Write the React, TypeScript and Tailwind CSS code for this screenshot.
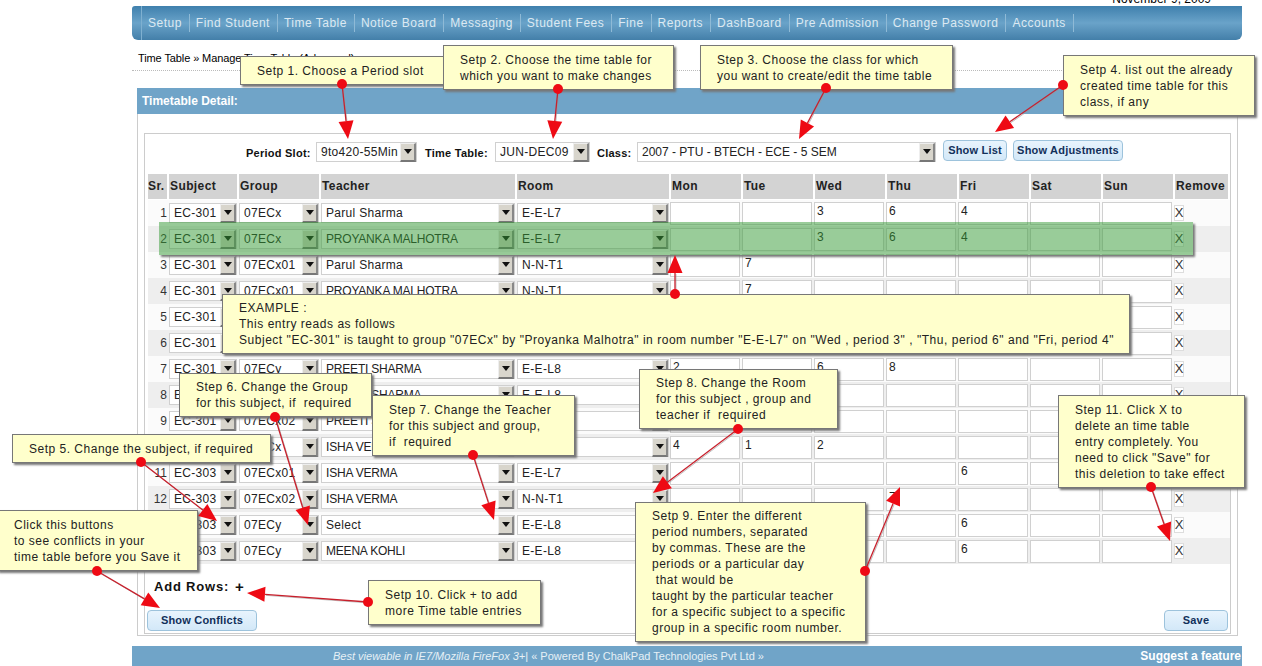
const font = { fontFamily: '"Liberation Sans", Arial, sans-serif' };

const navItems = [
  "Setup",
  "Find Student",
  "Time Table",
  "Notice Board",
  "Messaging",
  "Student Fees",
  "Fine",
  "Reports",
  "DashBoard",
  "Pre Admission",
  "Change Password",
  "Accounts",
];

const days = ["Mon", "Tue", "Wed", "Thu", "Fri", "Sat", "Sun"];

type Row = [string, string, string, string, string[]];

const rows: Row[] = [
  ["EC-301", "07ECx", "Parul Sharma", "E-E-L7", ["", "", "3", "6", "4", "", ""]],
  ["EC-301", "07ECx", "PROYANKA MALHOTRA", "E-E-L7", ["", "", "3", "6", "4", "", ""]],
  ["EC-301", "07ECx01", "Parul Sharma", "N-N-T1", ["", "7", "", "", "", "", ""]],
  ["EC-301", "07ECx01", "PROYANKA MALHOTRA", "N-N-T1", ["", "7", "", "", "", "", ""]],
  ["EC-301", "07ECx02", "Parul Sharma", "E-E-L8", ["", "", "", "", "", "", ""]],
  ["EC-301", "07ECx02", "PROYANKA MALHOTRA", "E-E-L8", ["", "", "", "", "", "", ""]],
  ["EC-301", "07ECy", "PREETI SHARMA", "E-E-L8", ["2", "", "6", "8", "", "", ""]],
  ["EC-301", "07ECy", "PREETI SHARMA", "E-E-L8", ["", "", "", "", "", "", ""]],
  ["EC-301", "07ECx02", "PREETI SHARMA", "E-E-L8", ["", "", "", "", "", "", ""]],
  ["EC-303", "07ECx", "ISHA VERMA", "E-E-L7", ["4", "1", "2", "", "", "", ""]],
  ["EC-303", "07ECx01", "ISHA VERMA", "E-E-L7", ["", "", "", "", "6", "", ""]],
  ["EC-303", "07ECx02", "ISHA VERMA", "N-N-T1", ["", "", "", "7", "", "", ""]],
  ["EC-303", "07ECy", "Select", "E-E-L8", ["", "", "", "", "6", "", ""]],
  ["EC-303", "07ECy", "MEENA KOHLI", "E-E-L8", ["", "", "", "", "6", "", ""]],
];

const callouts = [
  { text: "Setp 1. Choose a Period slot", cls: "left-[240px] top-[56px] w-[204px] h-[29px]" },
  { text: "Setp 2. Choose the time table for\nwhich you want to make changes", cls: "left-[443px] top-[45px] w-[231px] h-[45px]" },
  { text: "Step 3. Choose the class for which\nyou want to create/edit the time table", cls: "left-[700px] top-[45px] w-[253px] h-[45px]" },
  { text: "Setp 4. list out the already\ncreated time table for this\nclass, if any", cls: "left-[1063px] top-[55px] w-[192px] h-[61px]" },
  {
    text: 'EXAMPLE :\nThis entry reads as follows\nSubject "EC-301" is taught to group "07ECx" by "Proyanka Malhotra" in room number "E-E-L7" on "Wed , period 3" , "Thu, period 6" and "Fri, period 4"',
    cls: "left-[222px] top-[294px] w-[908px] h-[60px]",
    track: "tracking-[0.53px]",
  },
  { text: "Step 6. Change the Group\nfor this subject, if  required", cls: "left-[179px] top-[373px] w-[193px] h-[44px]" },
  { text: "Step 7. Change the Teacher\nfor this subject and group,\nif  required", cls: "left-[372px] top-[395px] w-[203px] h-[61px]" },
  { text: "Setp 5. Change the subject, if required", cls: "left-[12px] top-[434px] w-[259px] h-[29px]" },
  { text: "Click this buttons\nto see conflicts in your\ntime table before you Save it", cls: "left-[-3px] top-[510px] w-[201px] h-[61px]" },
  { text: "Setp 10. Click + to add\nmore Time table entries", cls: "left-[368px] top-[580px] w-[173px] h-[45px]" },
  { text: "Step 8. Change the Room\nfor this subject , group and\nteacher if  required", cls: "left-[639px] top-[369px] w-[199px] h-[60px]" },
  {
    text: "Setp 9. Enter the different\nperiod numbers, separated\nby commas. These are the\nperiods or a particular day\n that would be\ntaught by the particular teacher\nfor a specific subject to a specific\ngroup in a specific room number.",
    cls: "left-[635px] top-[502px] w-[231px] h-[140px]",
  },
  { text: 'Step 11. Click X to\ndelete an time table\nentry completely. You\nneed to click "Save" for\nthis deletion to take effect', cls: "left-[1058px] top-[395px] w-[187px] h-[93px]" },
];

// dot position, then arrow tip
const arrows = [
  [342, 84, 348, 139],
  [558, 89, 553, 139],
  [826, 88, 799, 139],
  [1063, 85, 995, 132],
  [675, 294, 675, 255],
  [275, 417, 308, 525],
  [141, 462, 217, 521],
  [473, 455, 494, 520],
  [738, 429, 653, 493],
  [865, 571, 900, 487],
  [1151, 487, 1170, 541],
  [368, 602, 247, 593],
  [97, 571, 160, 608],
];

function Arrows() {
  return (
    <svg className="pointer-events-none absolute left-0 top-0" width={1262} height={666}>
      {arrows.map(([x1, y1, x2, y2], i) => {
        const len = Math.hypot(x2 - x1, y2 - y1);
        const ux = (x2 - x1) / len;
        const uy = (y2 - y1) / len;
        const bx = x2 - ux * 18;
        const by = y2 - uy * 18;
        const head = `${x2},${y2} ${bx - uy * 7.5},${by + ux * 7.5} ${bx + uy * 7.5},${by - ux * 7.5}`;
        return (
          <g key={i}>
            <line x1={x1 + 1} y1={y1 + 1} x2={bx + 1} y2={by + 1} stroke="#999" strokeWidth={1} opacity={0.6} />
            <line x1={x1} y1={y1} x2={bx} y2={by} stroke="#c8202c" strokeWidth={1.3} />
            <polygon points={head} fill="#ee0a14" />
            <circle cx={x1} cy={y1} r={5} fill="#ee0a14" />
          </g>
        );
      })}
    </svg>
  );
}

function Select({ value, className }: { value: string; className: string }) {
  // capitals run narrower than the mixed case names in the picture
  const tracking = value.startsWith("2007") ? "tracking-[0px]" : /[A-Z]{4}/.test(value) ? "tracking-[-0.2px]" : "tracking-[0.3px]";
  return (
    <div className={`flex h-[20px] items-center justify-between border border-[#d0d0d0] bg-white pl-[4px] text-[12px] font-normal text-[#222] ${tracking} ${className}`}>
      <span className="whitespace-nowrap">{value}</span>
      <span className="flex h-[19px] w-[16px] shrink-0 items-center justify-center border-b-2 border-r-2 border-t border-l border-b-[#777] border-r-[#888] border-t-[#eee] border-l-[#eee] bg-[#d8d5cc]">
        <svg width="8" height="5" viewBox="0 0 8 5">
          <path d="M0 0h8L4 5z" fill="#111" />
        </svg>
      </span>
    </div>
  );
}

function Btn({ label, className }: { label: string; className: string }) {
  return (
    <button className={`h-[21px] rounded-[4px] border border-[#9dc3dc] bg-linear-to-b from-[#e8f4fd] to-[#d3e8f8] text-[11px] font-bold tracking-[0.2px] text-[#12305a] ${className}`}>
      {label}
    </button>
  );
}

export default function App() {
  return (
    <div className="relative h-[666px] w-[1262px] overflow-hidden bg-white text-black" style={font}>
      <div className="flex h-[6px] items-end justify-end overflow-hidden pr-[51px] text-[12px] leading-[14px]">
        November 9, 2009
      </div>

      <nav className="ml-[132px] flex h-[34px] w-[1110px] items-center rounded-b-[6px] rounded-tl-[3px] bg-linear-to-b from-[#3f80ad] via-[#6aa3c9] to-[#437fa9] text-[12px] tracking-[0.5px] text-[#dce9f2]">
        <span className="h-full w-[10px] shrink-0 border-r border-[#7fb0d0]" />
        {navItems.map((item) => (
          <span key={item} className="border-r border-[#8fbad6] pl-[6px] pr-[7px] leading-[18px] whitespace-nowrap">
            {item}
          </span>
        ))}
      </nav>

      <div className="ml-[132px] h-[31px] w-[1110px] border-b border-dotted border-[#bbb] pl-[6px] pt-[12px] text-[11px] leading-[13px] tracking-[-0.1px]">
        Time Table » Manage Time Table (Advanced)
      </div>

      <section className="ml-[137px] mt-[17px] w-[1101px]">
        <div className="h-[26px] bg-[#70a4c8] pl-[5px] text-[12px] font-bold leading-[26px] text-white">Timetable Detail:</div>
        <div className="border-x border-b border-[#ccc] px-[6px] pb-[1px] pt-[19px]">
          <div className="h-[501px] border border-[#ccc] pl-[3px]">
            <div className="flex h-[40px] items-start pt-[6px] text-[11px] font-bold tracking-[0.25px] text-[#111]">
              <span className="ml-[98px] mt-[5px] w-[66px]">Period Slot:</span>
              <Select value="9to420-55Min" className="ml-[4px] mt-[2px] w-[101px]" />
              <span className="ml-[8px] mt-[5px] w-[66px]">Time Table:</span>
              <Select value="JUN-DEC09" className="ml-[4px] mt-[2px] w-[95px]" />
              <span className="ml-[7px] mt-[5px] w-[36px]">Class:</span>
              <Select value="2007 - PTU - BTECH - ECE - 5 SEM" className="ml-[4px] mt-[2px] w-[299px]" />
              <Btn label="Show List" className="ml-[7px] w-[64px]" />
              <Btn label="Show Adjustments" className="ml-[6px] w-[110px]" />
            </div>

            <div className="grid grid-cols-[19px_68px_80px_194px_152px_repeat(7,70px)_53px] gap-x-[2px] text-[12px] font-bold tracking-[0.4px] text-[#222]">
              <div className="h-[25px] bg-[#d3d3d3] leading-[25px]">Sr.</div>
              {["Subject", "Group", "Teacher", "Room", ...days, "Remove"].map((h) => (
                <div key={h} className="h-[25px] bg-[#d3d3d3] pl-[1px] leading-[25px]">
                  {h}
                </div>
              ))}
            </div>

            <div className="mt-[1px]">
              {rows.map(([subject, group, teacher, room, periods], i) => (
                <div
                  key={i}
                  className={`grid h-[26px] grid-cols-[19px_68px_80px_194px_152px_repeat(7,70px)_53px] items-center gap-x-[2px] ${i % 2 === 1 ? "bg-[#eeeeee]" : "bg-[#fbfbfb]"}`}
                >
                  <div className="text-right text-[12px] text-[#333]">{i + 1}</div>
                  <Select value={subject} className="w-[68px]" />
                  <Select value={group} className="w-[80px]" />
                  <Select value={teacher} className="w-[194px]" />
                  <Select value={room} className="w-[152px]" />
                  {periods.map((p, d) => (
                    <input
                      key={d}
                      readOnly
                      value={p}
                      className="-ml-[1px] h-[23px] w-[70px] border border-[#d0d0d0] bg-white pb-[5px] pl-[2px] text-[12px] text-[#222] outline-none"
                    />
                  ))}
                  <div className="-ml-[1px] flex h-[16px] w-[10px] items-center justify-center border border-[#ddd] bg-white text-[13px] text-[#333]">X</div>
                </div>
              ))}
            </div>

            <div className="ml-[6px] mt-[14px] flex h-[18px] items-center text-[13px] font-bold tracking-[0.8px] text-[#111]">
              Add Rows:
              <span className="ml-[6px] text-[15px]">+</span>
            </div>

            <div className="mt-[14px] flex justify-between pr-[2px]">
              <Btn label="Show Conflicts" className="-ml-[1px] w-[110px]" />
              <Btn label="Save" className="w-[64px]" />
            </div>
          </div>
        </div>
      </section>

      <footer className="relative ml-[132px] mt-[10px] flex h-[20px] w-[1110px] items-center bg-[#70a4c8] pl-[201px] text-[11px] text-[#e6f0f6]">
        <span>
          <i>Best viewable in IE7/Mozilla FireFox 3+</i>| « Powered By ChalkPad Technologies Pvt Ltd »
        </span>
        <span className="absolute right-[1px] text-[12px] font-bold text-white">Suggest a feature</span>
      </footer>

      <div className="absolute left-[159px] top-[222px] h-[33px] w-[1034px] bg-[#339933]/50 shadow-[2px_2px_2px_#777]" />

      {callouts.map((c) => (
        <div
          key={c.text}
          className={`absolute flex items-center whitespace-pre border border-[#777] bg-[#ffffcc] pl-[16px] text-[12px] leading-[16px] text-[#222] shadow-[2px_2px_2px_#777] ${c.cls}`}
        >
          <span className={c.track ?? "tracking-[0.5px]"}>{c.text}</span>
        </div>
      ))}

      <Arrows />
    </div>
  );
}
